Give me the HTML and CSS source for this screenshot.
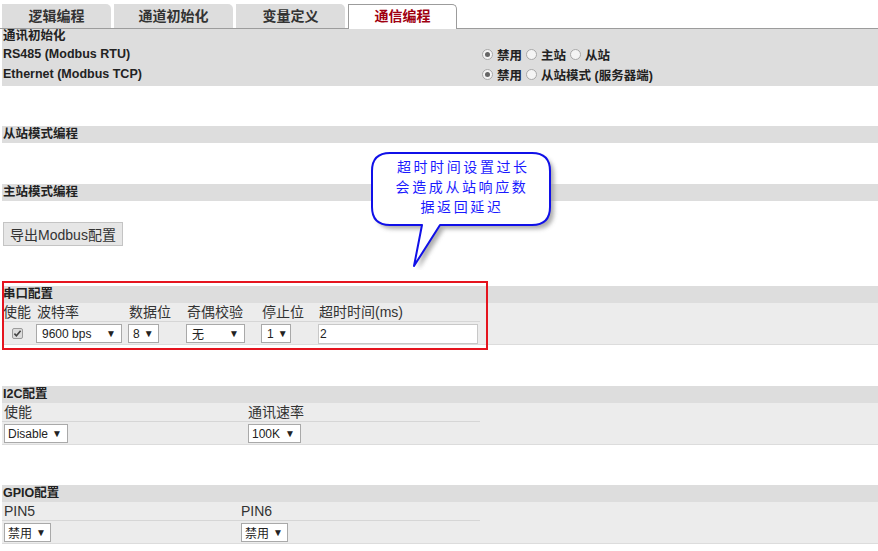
FILE: index.html
```html
<!DOCTYPE html>
<html lang="zh">
<head>
<meta charset="utf-8">
<title>通信编程</title>
<link rel="stylesheet" href="styles.css">
</head>
<body>
<div class="page">
  <div class="tabs">
    <div class="tab t1">逻辑编程</div>
    <div class="tab t2">通道初始化</div>
    <div class="tab t3">变量定义</div>
    <div class="tab t4 active">通信编程</div>
  </div>

  <div class="panel init">
    <div class="band-title">通讯初始化</div>
    <div class="init-row">
      <div class="init-label">RS485 (Modbus RTU)</div>
      <div class="radios">
        <span class="radio checked"></span><span class="rlabel">禁用</span>
        <span class="radio"></span><span class="rlabel">主站</span>
        <span class="radio"></span><span class="rlabel">从站</span>
      </div>
    </div>
    <div class="init-row">
      <div class="init-label">Ethernet (Modbus TCP)</div>
      <div class="radios">
        <span class="radio checked"></span><span class="rlabel">禁用</span>
        <span class="radio"></span><span class="rlabel">从站模式 (服务器端)</span>
      </div>
    </div>
  </div>

  <div class="band slave">从站模式编程</div>
  <div class="band master">主站模式编程</div>

  <button class="export">导出Modbus配置</button>

  <div class="cfg serial">
    <div class="band">串口配置</div>
    <div class="cfg-body">
      <div class="grid serial-grid">
        <div class="lbl">使能</div>
        <div class="lbl">波特率</div>
        <div class="lbl">数据位</div>
        <div class="lbl">奇偶校验</div>
        <div class="lbl">停止位</div>
        <div class="lbl">超时时间(ms)</div>
        <div class="cell chk-cell">
          <svg class="chk" width="11" height="11" viewBox="0 0 11 11"><rect x="0.5" y="0.5" width="10" height="10" rx="1.5" fill="#dcdcdc" stroke="#9a9a9a"/><path d="M2.4 5.6 L4.4 7.8 L8.6 2.8" fill="none" stroke="#444" stroke-width="1.6"/></svg>
        </div>
        <div class="cell"><span class="sel w-baud">9600 bps<i>▼</i></span></div>
        <div class="cell"><span class="sel w-bits">8<i>▼</i></span></div>
        <div class="cell"><span class="sel w-par">无<i>▼</i></span></div>
        <div class="cell"><span class="sel w-stop">1<i>▼</i></span></div>
        <div class="cell"><span class="inp">2</span></div>
      </div>
    </div>
    <div class="redbox"></div>
  </div>

  <div class="cfg i2c">
    <div class="band">I2C配置</div>
    <div class="cfg-body">
      <div class="grid i2c-grid">
        <div class="lbl">使能</div>
        <div class="lbl">通讯速率</div>
        <div class="cell"><span class="sel w-dis">Disable<i>▼</i></span></div>
        <div class="cell"><span class="sel w-100k">100K<i>▼</i></span></div>
      </div>
    </div>
  </div>

  <div class="cfg gpio">
    <div class="band">GPIO配置</div>
    <div class="cfg-body">
      <div class="grid gpio-grid">
        <div class="lbl">PIN5</div>
        <div class="lbl">PIN6</div>
        <div class="cell"><span class="sel w-pin">禁用<i>▼</i></span></div>
        <div class="cell"><span class="sel w-pin">禁用<i>▼</i></span></div>
      </div>
    </div>
  </div>

  <div class="callout">
    <svg class="bubble" width="200" height="125" viewBox="0 0 200 125">
      <defs>
        <filter id="sh" x="-20%" y="-20%" width="150%" height="150%">
          <feGaussianBlur stdDeviation="2"/>
        </filter>
      </defs>
      <path d="M26 8 H168 Q186 8 186 26 V62 Q186 80 168 80 H76 L50 121 L58 80 H26 Q8 80 8 62 V26 Q8 8 26 8 Z" fill="#9a9a9a" transform="translate(4 4)" filter="url(#sh)" opacity="0.8"/>
      <path d="M26 8 H168 Q186 8 186 26 V62 Q186 80 168 80 H76 L50 121 L58 80 H26 Q8 80 8 62 V26 Q8 8 26 8 Z" fill="#ffffff" stroke="#1010e8" stroke-width="2" stroke-linejoin="round"/>
    </svg>
    <div class="callout-text">超时时间设置过长<br>会造成从站响应数<br>据返回延迟</div>
  </div>
</div>
</body>
</html>
```

FILE: styles.css
```css
html, body {
  margin: 0;
  padding: 0;
  background: #ffffff;
}
body {
  font-family: "Liberation Sans", "Noto Sans CJK SC", sans-serif;
  font-size: 12px;
  color: #222;
  width: 878px;
  height: 551px;
  overflow: hidden;
}
.page {
  position: relative;
  padding-top: 4px;
}

/* tabs */
.tabs {
  display: flex;
  gap: 3px;
  padding-left: 2px;
  height: 24px;
  border-bottom: 1px solid #9c9c9c;
}
.tab {
  height: 24px;
  line-height: 24px;
  text-align: center;
  background: #dddddd;
  color: #333;
  font-size: 14px;
  font-weight: bold;
  border-top-right-radius: 5px;
  box-sizing: border-box;
}
.t1 { width: 109px; }
.t2 { width: 119px; }
.t3 { width: 109px; }
.t4 { width: 109px; }
.tab.active {
  background: #ffffff;
  color: #a00010;
  border: 1px solid #9c9c9c;
  border-bottom: none;
  height: 25px;
  line-height: 23px;
}

/* init panel */
.panel.init {
  background: #dddddd;
  margin-left: 2px;
  height: 57px;
  box-sizing: border-box;
  font-size: 12.5px;
}
.band-title {
  font-weight: bold;
  height: 15px;
  line-height: 15px;
  padding-left: 1px;
}
.init-row {
  display: flex;
  height: 20px;
  align-items: center;
  font-weight: bold;
}
.init-label {
  width: 476px;
  padding-left: 1px;
}
.radios {
  display: flex;
  align-items: center;
}
.radio {
  width: 11px;
  height: 11px;
  border-radius: 50%;
  border: 1px solid #a8a8a8;
  background: #f4f4f4;
  box-sizing: border-box;
  display: inline-flex;
  align-items: center;
  justify-content: center;
  margin: 0 3px 0 3px;
}
.radio.checked::after {
  content: "";
  width: 5px;
  height: 5px;
  border-radius: 50%;
  background: #666;
}
.rlabel {
  margin-right: 1px;
  margin-left: 1px;
}

/* bands */
.band {
  background: #dddddd;
  font-weight: bold;
  font-size: 12.5px;
  height: 17px;
  line-height: 17px;
  padding-left: 1px;
  margin-left: 2px;
}
.band.slave { margin-top: 40px; }
.band.master { margin-top: 41px; }

.export {
  display: block;
  margin: 21px 0 0 3px;
  width: 120px;
  height: 24px;
  padding: 0;
  font-family: "Liberation Sans", "Noto Sans CJK SC", sans-serif;
  font-size: 14px;
  color: #333;
  background: #e6e6e6;
  border: 1px solid #c4c4c4;
  border-radius: 0;
}

/* config sections */
.cfg {
  position: relative;
}
.serial { margin-top: 40px; }
.i2c { margin-top: 41px; }
.gpio { margin-top: 40px; }

.cfg-body {
  background: #ececec;
  margin-left: 2px;
  border-bottom: 1px solid #dcdcdc;
  height: 41px;
}
.grid {
  display: grid;
  width: 478px;
  grid-template-rows: 19px 21px;
}
.serial-grid { grid-template-columns: 34px 92px 58px 75px 57px 162px; }
.i2c-grid { grid-template-columns: 244px 234px; }
.gpio-grid { grid-template-columns: 237px 241px; }

.lbl {
  font-size: 14px;
  color: #333;
  line-height: 19px;
  padding-left: 1px;
  border-bottom: 1px solid #d6d6d6;
  white-space: nowrap;
}
.i2c .lbl, .gpio .lbl { padding-left: 2px; }
.cell {
  display: flex;
  align-items: center;
  padding-top: 2px;
}
.i2c .cell, .gpio .cell { padding-left: 2px; }
.chk-cell { padding-left: 10px; }
.chk { display: block; }

.sel {
  display: inline-flex;
  align-items: center;
  justify-content: space-between;
  height: 19px;
  box-sizing: border-box;
  border: 1px solid #a9a9a9;
  background: #fff;
  font-size: 12px;
  color: #222;
  padding: 0 5px 0 5px;
  white-space: nowrap;
}
.sel i {
  font-style: normal;
  font-size: 10px;
  color: #222;
  margin-left: 4px;
}
.w-baud { width: 86px; }
.w-bits { width: 31px; padding-left: 4px; }
.w-par { width: 59px; }
.w-stop { width: 30px; }
.w-dis { width: 64px; padding-left: 3px; }
.w-100k { width: 53px; padding-left: 3px; }
.w-pin { width: 47px; padding-left: 3px; }
.inp {
  display: inline-flex;
  align-items: center;
  width: 160px;
  height: 20px;
  box-sizing: border-box;
  border: 1px solid #c8c8c8;
  background: #fff;
  padding-left: 1px;
  font-size: 12px;
}

.redbox {
  position: absolute;
  left: 2px;
  top: -5px;
  width: 486px;
  height: 69px;
  box-sizing: border-box;
  border: 2px solid #e5141e;
  pointer-events: none;
}

/* callout */
.callout {
  position: absolute;
  left: 364px;
  top: 145px;
  width: 200px;
  height: 125px;
}
.bubble {
  position: absolute;
  left: 0;
  top: 0;
}
.callout-text {
  position: absolute;
  left: 8px;
  top: 11px;
  width: 180px;
  text-align: center;
  color: #1a1aff;
  font-family: "Noto Sans CJK SC", sans-serif;
  font-size: 14px;
  line-height: 20px;
  letter-spacing: 2.6px;
  text-indent: 2.6px;
}
```
